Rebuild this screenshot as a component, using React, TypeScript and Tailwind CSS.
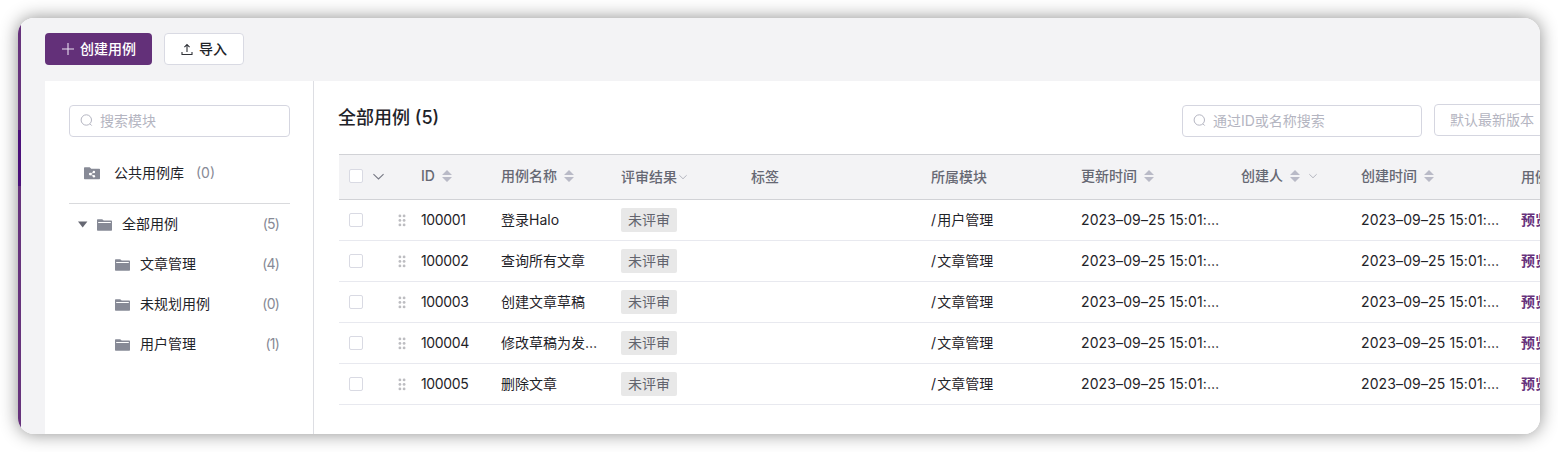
import React from "react";

const FONT = "font-[Inter,'Noto_Sans_CJK_SC',sans-serif]";
const GRID =
  "grid w-[1400px] grid-cols-[72px_80px_120px_130px_180px_150px_160px_120px_160px_228px]";

function SearchIcon() {
  return (
    <svg width="14" height="14" viewBox="0 0 14 14" fill="none" stroke="#b4b5c1" strokeWidth="1">
      <circle cx="6.3" cy="6" r="5.2" />
      <path d="M10 9.9l1.7 1.7" />
    </svg>
  );
}

function Sort() {
  return (
    <svg className="shrink-0" width="10" height="12" viewBox="0 0 10 12" fill="#b9bac7">
      <path d="M0 5L5 0l5 5zM0 7h10l-5 5z" />
    </svg>
  );
}

function Chevron({ size, color }: { size: number; color: string }) {
  return (
    <svg className="shrink-0" width={size} height={size} viewBox="0 0 10 10" fill="none" stroke={color} strokeWidth="1">
      <path d="M0.4 2.8L5 7.2l4.6-4.4" />
    </svg>
  );
}

function Folder() {
  return (
    <svg className="block shrink-0" width="15" height="12" viewBox="0 0 15 12">
      <path d="M0 .9Q0 .2.7.2h4.5l1.5 1.3h7.6q.7 0 .7.7v8.9q0 .7-.7.7H.7q-.7 0-.7-.7z" fill="#878a96" />
      <path d="M1.2 3.5h12.6" stroke="#fff" strokeWidth="1" />
    </svg>
  );
}

function SharedFolder() {
  return (
    <svg width="16" height="13" viewBox="0 0 16 13">
      <path d="M0 1Q0 .3.7.3h5l1.5 1.4h8.1q.7 0 .7.7v9.2q0 .7-.7.7H.7q-.7 0-.7-.7z" fill="#878a96" />
      <path d="M10 5L6.2 7.1 10 9.2" stroke="#fff" strokeWidth=".8" fill="none" />
      <g fill="#fff">
        <circle cx="9.9" cy="5" r="1.2" />
        <circle cx="6.3" cy="7.1" r="1.4" />
        <circle cx="9.9" cy="9.2" r="1.2" />
      </g>
    </svg>
  );
}

function Grip() {
  return (
    <svg width="8" height="13" viewBox="0 0 8 13" fill="#bdbdc1">
      {[1.9, 6.1].flatMap((x) =>
        [1.9, 6.4, 10.9].map((y) => <circle key={`${x}-${y}`} cx={x} cy={y} r="1.4" />)
      )}
    </svg>
  );
}

function Checkbox() {
  return <span className="block size-[14px] shrink-0 rounded-[2px] border border-[#d9dae3] bg-white" />;
}

function TreeRow({ name, count, root }: { name: string; count: number; root?: boolean }) {
  return (
    <div className={`flex h-10 items-center pr-[11px] ${root ? "pl-[9px]" : "pl-[46px]"}`}>
      {root && (
        <svg className="mr-[9px] shrink-0" width="10" height="8" viewBox="0 0 10 8">
          <path d="M0 1.4h9.4L4.7 7.4z" fill="#666873" />
        </svg>
      )}
      <span className="pt-[2px]"><Folder /></span>
      <span className="ml-[10px] text-[#1f2329]">{name}</span>
      <span className="ml-auto tracking-[-0.8px] text-[#878a96]">({count})</span>
    </div>
  );
}

function Head({ text, sort, menu, low }: { text: string; sort?: boolean; menu?: boolean; low?: boolean }) {
  return (
    <div className={`flex items-center pl-[10px] ${low ? "pb-[1px]" : "pb-[3px]"}`}>
      <span className="whitespace-nowrap">{text}</span>
      {sort && <span className="ml-[7px]"><Sort /></span>}
      {menu && <span className={sort ? "ml-[9px]" : "ml-[2px]"}><Chevron size={8} color="#a5a7b2" /></span>}
    </div>
  );
}

const cases = [
  ["100001", "登录Halo", "/用户管理"],
  ["100002", "查询所有文章", "/文章管理"],
  ["100003", "创建文章草稿", "/文章管理"],
  ["100004", "修改草稿为发…", "/文章管理"],
  ["100005", "删除文章", "/文章管理"],
];

const TIME = "2023–09–25 15:01:…";

export default function App() {
  return (
    <div className={`h-[452px] w-[1558px] overflow-hidden bg-white px-[18px] pt-[18px] text-[14px] leading-[22px] text-[#1f2329] ${FONT}`}>
      <div className="h-[416px] w-[1522px] rounded-[16px] shadow-[0_0_18px_rgba(0,0,0,0.45)]">
        <div className="flex h-full w-full overflow-hidden rounded-[16px] bg-[#f3f3f5]">
          <div className="flex w-[3px] shrink-0 flex-col bg-[#66327c]">
            <div className="mt-[112px] h-[56px] bg-[#4b0f7a]" />
          </div>
          <div className="flex min-w-0 flex-1 flex-col pl-6">
            <div className="flex h-[63px] shrink-0 gap-3 pt-[15px]">
              <button className="flex h-8 w-[107px] items-center rounded-[4px] bg-[#633079] pl-[17px] font-medium text-white">
                <svg width="12" height="12" viewBox="0 0 12 12" stroke="#e9dff0" strokeWidth="1.1">
                  <path d="M6 0v12M0 6h12" />
                </svg>
                <span className="ml-[6px]">创建用例</span>
              </button>
              <button className="flex h-8 w-20 items-center rounded-[4px] border border-[#d9dae3] bg-white pl-4 font-medium">
                <svg width="13" height="13" viewBox="0 0 13 13" fill="none" stroke="#303238" strokeWidth="1.1">
                  <path d="M6 9V1.6M3.4 4.2L6 1.6l2.6 2.6M1 9v2.5h10V9" />
                </svg>
                <span className="ml-[5px]">导入</span>
              </button>
            </div>
            <div className="flex min-h-0 flex-1 bg-white">
              <aside className="w-[269px] shrink-0 border-r border-[#dddee3] pl-6 pr-[23px] pt-6">
                <div className="flex h-8 items-center rounded-[4px] border border-[#d5d6e0] pl-[10px] text-[#b4b5c1]">
                  <SearchIcon />
                  <span className="ml-[6px]">搜索模块</span>
                </div>
                <div className="mt-[11px] flex h-[50px] items-center pl-[15px]">
                  <SharedFolder />
                  <span className="ml-[14px]">公共用例库</span>
                  <span className="ml-[12px] text-[#878a96]">(0)</span>
                </div>
                <div className="mt-[5px] border-t border-[#d9dadd]">
                  <TreeRow root name="全部用例" count={5} />
                  <TreeRow name="文章管理" count={4} />
                  <TreeRow name="未规划用例" count={0} />
                  <TreeRow name="用户管理" count={1} />
                </div>
              </aside>
              <main className="min-w-0 flex-1 overflow-hidden pl-[25px]">
                <div className="flex h-[73px] w-[1400px]">
                  <h1 className="-ml-px w-[844px] shrink-0 pt-[24px] text-[18px] font-medium leading-[26px]">全部用例 (5)</h1>
                  <div className="mt-6 flex h-8 w-60 shrink-0 items-center rounded-[4px] border border-[#d5d6e0] pl-[10px] text-[#b4b5c1]">
                    <SearchIcon />
                    <span className="ml-[6px]">通过ID或名称搜索</span>
                  </div>
                  <div className="ml-3 mt-[23px] h-8 w-[160px] shrink-0 rounded-[4px] border border-[#d5d6e0] pl-[15px] leading-[30px] text-[#b4b5c1]">
                    默认最新版本
                  </div>
                </div>
                <div className={`${GRID} h-[46px] border-y border-[#d1d2d6] bg-[#f3f3f5] font-medium text-[#666873]`}>
                  <div className="flex items-center pb-[2px] pl-[10px]">
                    <Checkbox />
                    <span className="ml-[10px] pt-[1px]"><Chevron size={11} color="#777984" /></span>
                  </div>
                  <Head text="ID" sort />
                  <Head text="用例名称" sort />
                  <Head text="评审结果" menu low />
                  <Head text="标签" low />
                  <Head text="所属模块" low />
                  <Head text="更新时间" sort />
                  <Head text="创建人" sort menu />
                  <Head text="创建时间" sort />
                  <Head text="用例等级" low />
                </div>
                {cases.map(([id, name, path]) => (
                  <div key={id} className={`${GRID} h-[41px] items-center border-b border-[#e8e9ef] *:pl-[10px] *:whitespace-nowrap`}>
                    <div className="flex items-center">
                      <Checkbox />
                      <span className="ml-[35px]"><Grip /></span>
                    </div>
                    <div className="tracking-[-0.35px]">{id}</div>
                    <div>{name}</div>
                    <div>
                      <span className="flex h-6 w-14 items-center justify-center rounded-[2px] bg-[#e8e8e8] text-[#62646d]">未评审</span>
                    </div>
                    <div />
                    <div><span className="tracking-[1.3px]">/</span>{path.slice(1)}</div>
                    <div className="tracking-[0.12px]">{TIME}</div>
                    <div />
                    <div className="tracking-[0.12px]">{TIME}</div>
                    <div className="font-bold text-[#66327c]">预览</div>
                  </div>
                ))}
              </main>
            </div>
          </div>
        </div>
      </div>
    </div>
  );
}
